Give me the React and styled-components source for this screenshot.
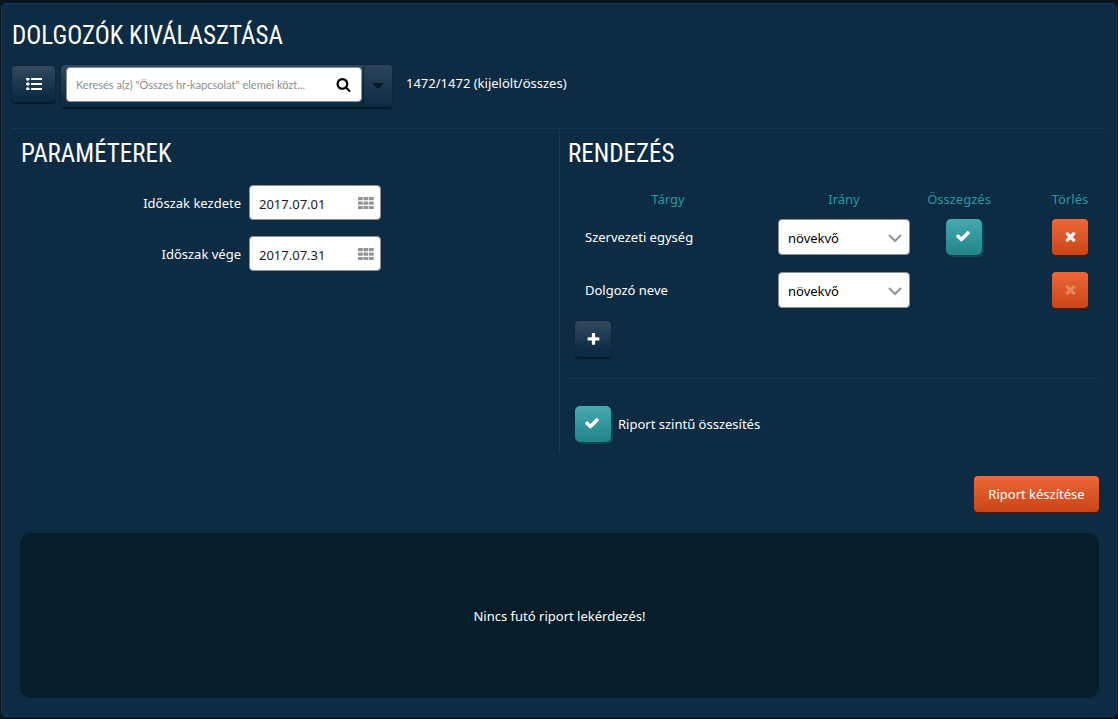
import { useState } from "react";
import styled, { createGlobalStyle } from "styled-components";

const GlobalStyle = createGlobalStyle`
  * {
    box-sizing: border-box;
  }
  body {
    margin: 0;
    background: #06151f;
    color: #ffffff;
    font-family: "Noto Sans", "Open Sans", sans-serif;
    font-size: 13px;
    line-height: 18px;
  }
  button, input, select {
    font: inherit;
  }
`;

const Panel = styled.main`
  margin: 3px 1px 2px 1px;
  padding: 0 10px 18px;
  border: 1px solid #12395a;
  border-radius: 5px;
  background: #0d2b43;
`;

const Title = styled.h2`
  margin: 0;
  padding-top: 2px;
  font-family: "Roboto Condensed", "Open Sans Condensed", sans-serif;
  font-size: 25px;
  font-weight: 400;
  line-height: 30px;
  text-transform: uppercase;
`;

const Header = styled.header`
  padding: 15px 0 21px;
  border-bottom: 1px solid #12385a;
`;

const Toolbar = styled.div`
  display: flex;
  align-items: flex-start;
  margin-top: 14px;
`;

const Count = styled.span`
  line-height: 36px;
`;

const Button = styled.button`
  display: flex;
  align-items: center;
  justify-content: center;
  width: ${(props) => props.$width || "36px"};
  height: 36px;
  padding: 0;
  border: none;
  border-radius: 4px;
  color: #ffffff;
  cursor: pointer;
`;

const DarkButton = styled(Button)`
  background: linear-gradient(#31495d, #0d2b43 85%);
  box-shadow: 0 2px 1px #061a26, 0 0 1px #061a26;
`;

const ListButton = styled(DarkButton)`
  margin-top: 1px;
`;

const OrangeButton = styled(Button)`
  background: linear-gradient(#ec6839, #c94416);
  box-shadow: 0 2px 1px #4a1c0c, 0 0 1px #4a1c0c;

  &:disabled {
    color: #e48660;
    cursor: default;
  }
`;

const SearchGroup = styled.form`
  display: flex;
  width: 331px;
  height: 42px;
  margin: 0 14px 0 6px;
  border-radius: 4px;
  background: linear-gradient(#31495d, #0d2b43 85%);
  box-shadow: 0 2px 1px #061a26, 0 0 1px #061a26;
`;

const Field = styled.div`
  display: flex;
  align-items: center;
  width: ${(props) => props.$width || "132px"};
  height: 35px;
  border: 1px solid #8e8e8e;
  border-radius: 4px;
  background: #ffffff;
`;

const SearchField = styled(Field)`
  flex: 1;
  margin: 2px 1px 0 5px;
`;

const TextInput = styled.input`
  flex: 1;
  min-width: 0;
  padding: 2px 0 0 9px;
  border: none;
  outline: none;
  background: transparent;
  color: #1a1a1a;
`;

const SearchInput = styled(TextInput)`
  padding-top: 0;
  font-family: Lato, sans-serif;
  font-size: 11px;

  &::placeholder {
    color: #8c8c8c;
  }
`;

const IconButton = styled.button`
  display: flex;
  padding: 0;
  margin-right: ${(props) => props.$gap || "6px"};
  border: none;
  background: none;
  color: ${(props) => props.$color || "#949494"};
  cursor: pointer;
`;

const CaretButton = styled.button`
  display: flex;
  align-items: center;
  justify-content: center;
  width: 29px;
  padding: 0;
  border: none;
  border-left: 1px solid #0a2234;
  border-radius: 4px;
  background: linear-gradient(#2b4459, #0d2b43);
  color: #061a26;
  cursor: pointer;
`;

const Columns = styled.div`
  display: grid;
  grid-template-columns: 1fr 1fr;
`;

const Parameters = styled.section`
  padding: 8px 9px;
`;

const Sorting = styled.section`
  padding: 8px 8px 11px;
  border-left: 1px solid #12385a;
`;

const FormRow = styled.div`
  display: grid;
  grid-template-columns: 220px 132px;
  align-items: center;
  column-gap: 8px;
  margin-top: 16px;

  label {
    text-align: right;
  }
`;

const SortTable = styled.table`
  width: 100%;
  margin-top: 20px;
  border-collapse: collapse;

  th {
    height: 21px;
    padding: 0 0 2px;
    color: #289a9f;
    font-weight: 400;
  }
  td {
    height: 53px;
    padding: 0;
  }
  td:first-child {
    padding-left: 17px;
  }
  th:nth-child(2), td:nth-child(2) {
    width: 152px;
    padding-left: 10px;
    padding-right: 10px;
  }
  th:nth-child(3) {
    width: 122px;
    padding-right: 44px;
  }
  td:nth-child(3) {
    padding-right: 34px;
  }
  th:nth-child(4), td:nth-child(4) {
    width: 56px;
  }
  td > button, td > span {
    margin: 0 auto;
  }
`;

const SelectWrap = styled.div`
  display: grid;
  align-items: center;

  > * {
    grid-area: 1 / 1;
  }
  svg {
    justify-self: end;
    margin-top: 3px;
    margin-right: 8px;
    pointer-events: none;
  }
`;

const Select = styled.select`
  width: 100%;
  height: 36px;
  padding: 2px 24px 0 9px;
  border: 1px solid #8e8e8e;
  border-radius: 4px;
  appearance: none;
  background: #ffffff;
  color: #000000;
`;

const CheckWrap = styled.span`
  display: grid;
  place-items: center;
  width: 36px;
  height: 36px;

  > * {
    grid-area: 1 / 1;
  }
  svg {
    margin: 0 2px 2px 0;
    pointer-events: none;
  }
`;

const Checkbox = styled.input.attrs({ type: "checkbox" })`
  width: 36px;
  height: 36px;
  margin: 0;
  border-radius: 5px;
  appearance: none;
  background: linear-gradient(#46aab0, #228389);
  box-shadow: 2px 2px 0 #07494f;
  cursor: pointer;

  &:not(:checked) + svg {
    visibility: hidden;
  }
`;

const AddRow = styled.div`
  padding: 5px 0 21px 7px;
  border-bottom: 1px solid #12385a;
`;

const Summary = styled.div`
  display: flex;
  align-items: center;
  gap: 7px;
  padding: 27px 0 0 7px;
`;

const Actions = styled.div`
  display: flex;
  justify-content: flex-end;
  padding: 23px 7px 21px;
`;

const Result = styled.div`
  display: flex;
  align-items: center;
  justify-content: center;
  min-height: 165px;
  margin: 0 7px 0 8px;
  border-radius: 11px;
  background: #071e2a;
`;

const paths = {
  check:
    "M1671 566q0 40-28 68l-724 724-136 136q-28 28-68 28t-68-28l-136-136-362-362q-28-28-28-68t28-68l136-136q28-28 68-28t68 28l294 295 656-657q28-28 68-28t68 28l136 136q28 28 28 68z",
  times:
    "M1490 1322q0 40-28 68l-136 136q-28 28-68 28t-68-28l-294-294-294 294q-28 28-68 28t-68-28l-136-136q-28-28-28-68t28-68l294-294-294-294q-28-28-28-68t28-68l136-136q28-28 68-28t68 28l294 294 294-294q28-28 68-28t68 28l136 136q28 28 28 68t-28 68l-294 294 294 294q28 28 28 68z",
  plus: "M1600 736v192q0 40-28 68t-68 28h-416v416q0 40-28 68t-68 28h-192q-40 0-68-28t-28-68v-416h-416q-40 0-68-28t-28-68v-192q0-40 28-68t68-28h416v-416q0-40 28-68t68-28h192q40 0 68 28t28 68v416h416q40 0 68 28t28 68z",
  search:
    "M1216 832q0-185-131.5-316.5t-316.5-131.5-316.5 131.5-131.5 316.5 131.5 316.5 316.5 131.5 316.5-131.5 131.5-316.5zm512 832q0 52-38 90t-90 38q-54 0-90-38l-343-342q-179 124-399 124-143 0-273.5-55.5t-225-150-150-225-55.5-273.5 55.5-273.5 150-225 225-150 273.5-55.5 273.5 55.5 225 150 150 225 55.5 273.5q0 220-124 399l343 343q37 37 37 90z",
};

function Icon({ name, size = 16 }) {
  return (
    <svg width={size} height={size} viewBox="0 0 1792 1792" fill="currentColor">
      <path d={paths[name]} />
    </svg>
  );
}

function ListIcon() {
  return (
    <svg width="16" height="12" viewBox="0 0 16 12" fill="currentColor">
      {[0, 5, 10].map((y) => (
        <g key={y}>
          <circle cx="1.8" cy={y + 1} r="1.8" />
          <rect x="5" y={y} width="11" height="2" />
        </g>
      ))}
    </svg>
  );
}

function GridIcon() {
  return (
    <svg width="16" height="12" viewBox="0 0 16 12" fill="currentColor">
      {[0, 4.5, 9].map((y) =>
        [0, 5.5, 11].map((x) => (
          <rect key={x + "-" + y} x={x} y={y} width="4.8" height="3.2" rx="0.6" />
        ))
      )}
    </svg>
  );
}

function DateRow({ id, label, initial }) {
  const [value, setValue] = useState(initial);

  return (
    <FormRow>
      <label htmlFor={id}>{label}</label>
      <Field>
        <TextInput
          id={id}
          value={value}
          onChange={(e) => setValue(e.target.value)}
        />
        <IconButton type="button" aria-label={label}>
          <GridIcon />
        </IconButton>
      </Field>
    </FormRow>
  );
}

function CheckButton({ id, label }) {
  return (
    <CheckWrap>
      <Checkbox id={id} aria-label={label} defaultChecked />
      <Icon name="check" />
    </CheckWrap>
  );
}

function SortRow({ label, summed, locked }) {
  return (
    <tr>
      <td>{label}</td>
      <td>
        <SelectWrap>
          <Select defaultValue="asc" aria-label="Irány">
            <option value="asc">növekvő</option>
            <option value="desc">csökkenő</option>
          </Select>
          <svg width="14" height="9" viewBox="0 0 14 9" fill="none" stroke="#949494" strokeWidth="2">
            <path d="M1 1l6 6 6-6" />
          </svg>
        </SelectWrap>
      </td>
      <td>{summed && <CheckButton label="Összegzés" />}</td>
      <td>
        <OrangeButton type="button" aria-label="Törlés" disabled={locked}>
          <Icon name="times" size={15} />
        </OrangeButton>
      </td>
    </tr>
  );
}

export default function App() {
  return (
    <>
      <GlobalStyle />
      <Panel>
        <Header>
          <Title>Dolgozók kiválasztása</Title>
          <Toolbar>
            <ListButton type="button" $width="43px">
              <ListIcon />
            </ListButton>
            <SearchGroup onSubmit={(e) => e.preventDefault()}>
              <SearchField>
                <SearchInput
                  aria-label="Keresés"
                  placeholder='Keresés a(z) "Összes hr-kapcsolat" elemei közt...'
                />
                <IconButton aria-label="Keresés" $color="#000000" $gap="10px">
                  <Icon name="search" size={15} />
                </IconButton>
              </SearchField>
              <CaretButton type="button">
                <svg width="12" height="6" viewBox="0 0 12 6" fill="currentColor">
                  <path d="M0 0h12l-6 6z" />
                </svg>
              </CaretButton>
            </SearchGroup>
            <Count>1472/1472 (kijelölt/összes)</Count>
          </Toolbar>
        </Header>
        <Columns>
          <Parameters>
            <Title>Paraméterek</Title>
            <DateRow id="start" label="Időszak kezdete" initial="2017.07.01" />
            <DateRow id="end" label="Időszak vége" initial="2017.07.31" />
          </Parameters>
          <Sorting>
            <Title>Rendezés</Title>
            <SortTable>
              <thead>
                <tr>
                  <th>Tárgy</th>
                  <th>Irány</th>
                  <th>Összegzés</th>
                  <th>Törlés</th>
                </tr>
              </thead>
              <tbody>
                <SortRow label="Szervezeti egység" summed />
                <SortRow label="Dolgozó neve" locked />
              </tbody>
            </SortTable>
            <AddRow>
              <DarkButton type="button">
                <Icon name="plus" size={15} />
              </DarkButton>
            </AddRow>
            <Summary>
              <CheckButton id="summary" />
              <label htmlFor="summary">Riport szintű összesítés</label>
            </Summary>
          </Sorting>
        </Columns>
        <Actions>
          <OrangeButton type="button" $width="125px">
            Riport készítése
          </OrangeButton>
        </Actions>
        <Result>Nincs futó riport lekérdezés!</Result>
      </Panel>
    </>
  );
}
